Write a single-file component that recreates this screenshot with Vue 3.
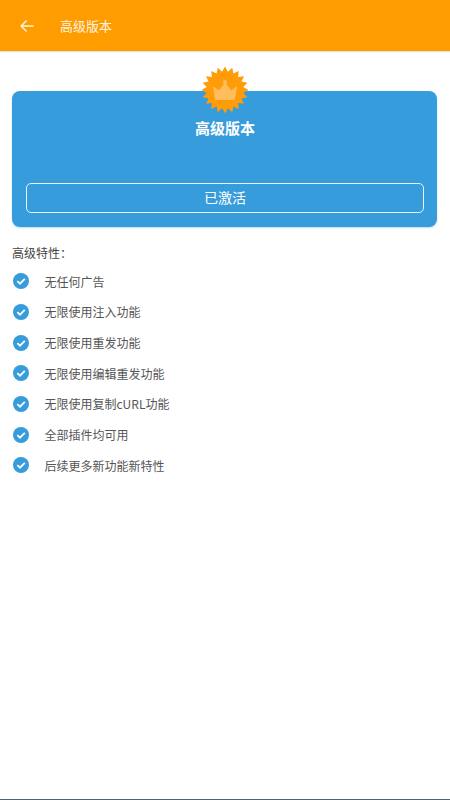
<script setup>
const features = [
  '无任何广告',
  '无限使用注入功能',
  '无限使用重发功能',
  '无限使用编辑重发功能',
  '无限使用复制cURL功能',
  '全部插件均可用',
  '后续更多新功能新特性'
]
const n = 20
const burst = Array.from({ length: n * 2 }, (_, i) => {
  const r = i % 2 === 0 ? 23.5 : 18.5
  const a = (Math.PI * i) / n - Math.PI / 2
  return `${(24 + r * Math.cos(a)).toFixed(2)},${(24 + r * Math.sin(a)).toFixed(2)}`
}).join(' ')
</script>

<template>
  <div class="page">
    <header class="bar">
      <svg class="back" viewBox="0 0 24 24" width="20" height="20" fill="none" stroke="#fff3e0" stroke-width="1.8">
        <path d="M20 12H5M11.5 5.5 5 12l6.500 6.500" />
      </svg>
      <span class="bar-title">高级版本</span>
    </header>
    <main class="content">
      <section class="card">
        <svg class="badge" viewBox="0 0 48 48" width="48" height="48">
          <polygon :points="burst" fill="#ff9c07" />
          <path d="M12.500 21 18 25 24 17 30 25 35.500 21 33.500 33.500H14.500Z" fill="#ffbd5c" stroke="#ffbd5c" stroke-linejoin="round" />
          <circle cx="24" cy="16" r="2" fill="#ffbd5c" />
        </svg>
        <h1 class="card-title">高级版本</h1>
        <button class="activate"><span class="activate-text">已激活</span></button>
      </section>
      <p class="label">高级特性：</p>
      <ul class="list">
        <li v-for="f in features" :key="f" class="row">
          <svg viewBox="0 0 16 16" width="16" height="16" class="check">
            <circle cx="8" cy="8" r="8" fill="#379cdb" />
            <path d="M4.300 8.200 7 10.700 11.800 5.800" fill="none" stroke="#fff" stroke-width="1.800" />
          </svg>
          <span>{{ f }}</span>
        </li>
      </ul>
    </main>
    <div class="edge"></div>
  </div>
</template>

<style scoped>
.page {
  height: 800px;
  display: flex;
  flex-direction: column;
  background: #fff;
  font-family: "Noto Sans CJK SC", "Noto Sans", sans-serif;
}
.bar {
  height: 51px;
  flex: none;
  display: flex;
  align-items: center;
  padding-left: 17px;
  background: #ff9c00;
  box-shadow: 0 1px 1px rgba(0, 0, 0, 0.12);
}
.back {
  margin-right: 23px;
}
.bar-title {
  color: #fff3e0;
  font-size: 13px;
}
.content {
  flex: 1;
  padding: 40px 13px 0 12px;
}
.card {
  position: relative;
  height: 136px;
  box-sizing: border-box;
  padding: 27px 13px 14px 14px;
  display: flex;
  flex-direction: column;
  background: #379cdb;
  border-radius: 8px;
  box-shadow: 0 1px 2px rgba(55, 156, 219, 0.35);
}
.badge {
  position: absolute;
  left: 189px;
  top: -25px;
}
.card-title {
  margin: 0;
  text-align: center;
  color: #fff;
  font-size: 15px;
  line-height: 20px;
  font-weight: 700;
}
.activate {
  margin-top: auto;
  height: 30px;
  padding: 0 0 2px;
  background: transparent;
  border: 1.500px solid #e6f3fb;
  border-radius: 5px;
  color: #fff;
  font: inherit;
  font-size: 14px;
}
.label {
  margin: 17px 0 0;
  font-size: 12px;
  line-height: 18px;
  color: #444;
}
.list {
  list-style: none;
  margin: 4px 0 0;
  padding: 0 0 0 1px;
  display: grid;
  grid-auto-rows: 30.670px;
}
.row {
  display: flex;
  align-items: center;
  gap: 15.500px;
  font-size: 12px;
  color: #555;
}
.check {
  flex: none;
}
.edge {
  height: 1px;
  flex: none;
  background: #4a6272;
}
</style>
